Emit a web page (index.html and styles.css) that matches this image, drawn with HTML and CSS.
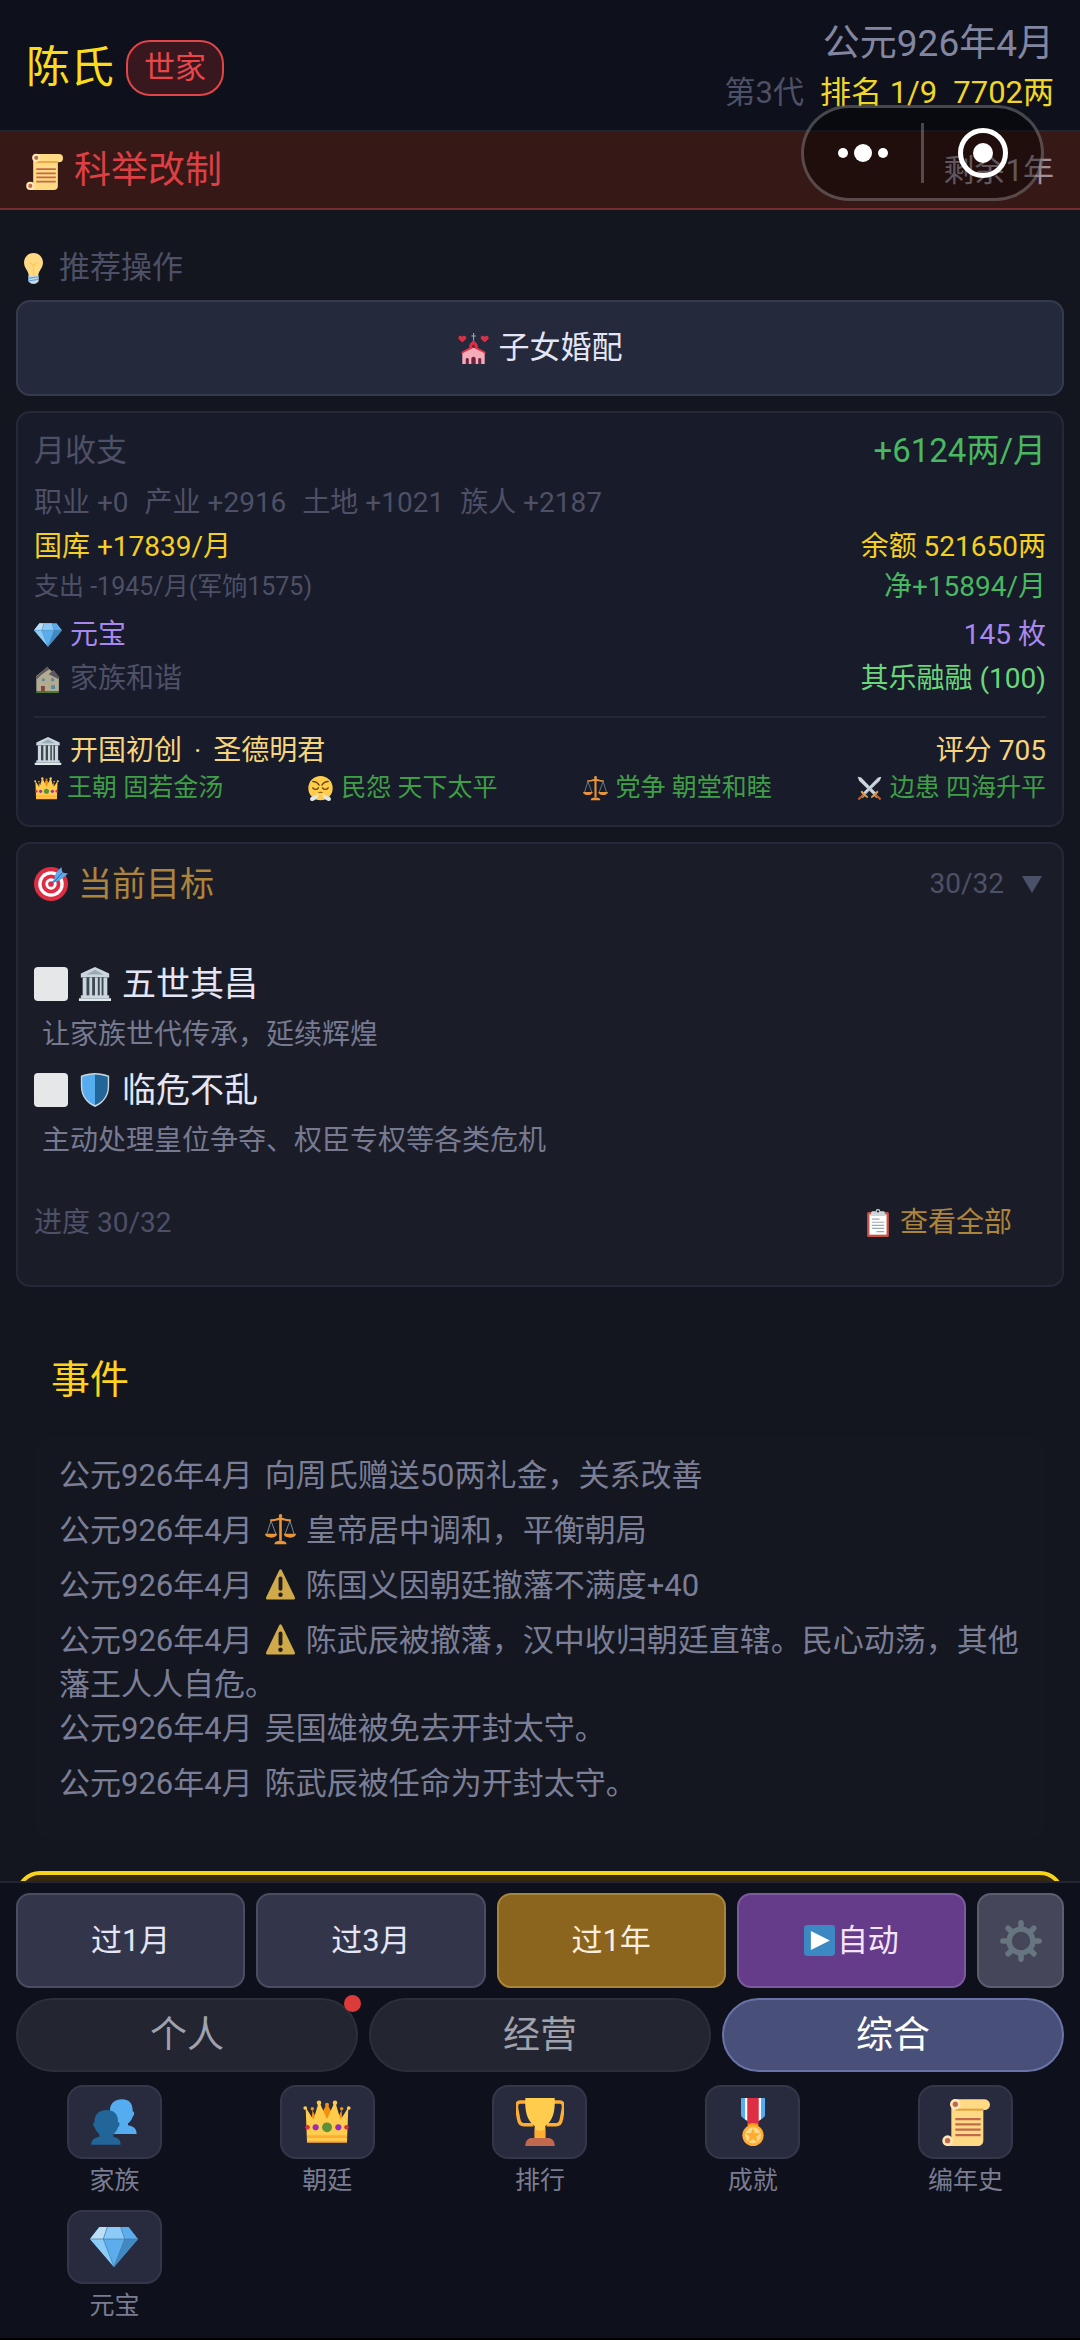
FILE: index.html
```html
<!DOCTYPE html>
<html lang="zh-CN">
  <head>
    <meta charset="UTF-8" />
    <meta name="viewport" content="width=device-width, initial-scale=1.0" />
    <title>陈氏 - 世家</title>
    <link rel="stylesheet" href="styles.css">
  </head>
  <body>
    <!-- Icons -->
    <svg class="sprite" width="0" height="0" aria-hidden="true">
      <symbol id="i-scroll" viewBox="0 0 36 36">
        <path d="M9 1h23a3.500 3.500 0 0 1 0 8H31v23a4 4 0 0 1-4 4H4v-4h3V4a3 3 0 0 1 2-3z" fill="#ffd983" />
        <path d="M10 8h21v1.500H10z" fill="#e39f3d" />
        <circle cx="10" cy="4.700" r="4" fill="#ffe8b6" /><circle cx="10" cy="4.700" r="2" fill="#c1694f" />
        <circle cx="4.200" cy="32" r="4" fill="#ffe8b6" /><circle cx="4.200" cy="32" r="2" fill="#c1694f" />
        <path d="M10 15.800h19M10 19.800h19M10 23.800h19M10 27.800h19" stroke="#c1694f" stroke-width="1.700" />
      </symbol>
      <symbol id="i-bulb" viewBox="0 0 36 36">
        <path d="M18 0c6.500 0 11 5 11 11 0 7-5.500 9.500-5.500 16h-11C12.500 20.500 7 18 7 11 7 5 11.500 0 18 0z" fill="#ffd983" />
        <path d="M14 11l4 4 4-4M18 15v12" stroke="#ffcc4d" stroke-width="1.500" fill="none" />
        <path d="M12 26h12v6c0 2-3 4-6 4s-6-2-6-4z" fill="#ccd6dd" />
        <path d="M12 29.500l12-2M12 32.500l12-2" stroke="#50a5e6" stroke-width="1.300" />
      </symbol>
      <symbol id="i-church" viewBox="0 0 36 36">
        <path d="M17.500 0h1.200v3h2v1.200h-2V9h-1.200V4.200h-2V3h2z" fill="#9aaab4" />
        <path d="M5 22l13-7 13 7v14H5z" fill="#f4abba" />
        <path d="M14 13l4-4 4 4v7h-8z" fill="#f4abba" />
        <path d="M13 14l5-6 5 6v3l9 5v2L18 17 4 24v-2l9-5z" fill="#dd2e44" />
        <path d="M16.500 17v-2a1.500 1.500 0 0 1 3 0v2zM9 36v-6a2 2 0 0 1 3.500 0v6zM15.500 36v-6a2.500 2.500 0 0 1 5 0v6zM23.500 36v-6a2 2 0 0 1 3.500 0v6z" fill="#6b2440" />
        <path d="M5 11L.7 7C-.8 3 4 2 5 4.500 6 2 10.800 3 9.300 7zM31 11l-4.300-4c-1.500-4 3.300-5 4.300-2.500 1-2.500 5.800-1.500 4.300 2.500z" fill="#dd2e44" />
      </symbol>
      <symbol id="i-gem" viewBox="0 0 36 36">
        <path d="M7 3h22l7 9-18 21L0 12z" fill="#5dadec" />
        <path d="M7 3h6l-3 9H0z" fill="#bddef4" />
        <path d="M13 3h10l3 9H10z" fill="#8ccaf7" />
        <path d="M0 12h10l8 21z" fill="#8ccaf7" />
        <path d="M26 12h10L18 33z" fill="#4289c1" />
        <path d="M0 12h36M13 3l-3 9 8 21 8-21-3-9" fill="none" stroke="#3a78aa" stroke-width=".5" />
      </symbol>
      <symbol id="i-house" viewBox="0 0 36 36">
        <path d="M3 34V14L17 3l15 13v18z" fill="#d9cfae" />
        <path d="M2 16L17 2l3 3-11 8-5 5zM19 12l6-6 8 10-2 2z" fill="#6f6868" />
        <path d="M4 34h28v2H2z" fill="#5c913b" />
        <path d="M9 27h5v7H9z" fill="#a0533c" />
        <path d="M22 26h5v5h-5zM22 17h4v4h-4z" fill="#6ba4b8" />
        <circle cx="12" cy="19" r="2" fill="#6ba4b8" />
      </symbol>
      <symbol id="i-bank" viewBox="0 0 36 36">
        <path d="M18 0l15 7v4H3V7z" fill="#ccd6dd" />
        <path d="M18 3l9 5H9z" fill="#99aab5" />
        <path d="M5 11h26v20H5z" fill="#3e4850" />
        <path d="M5 11h4v20H5zM12 11h3v20h-3zM18 11h3v20h-3zM27 11h4v20h-4zM23 11h2v20h-2z" fill="#ccd6dd" />
        <path d="M3 30h30v3H3z" fill="#ccd6dd" /><path d="M1 33h34v3H1z" fill="#e1e8ed" />
      </symbol>
      <symbol id="i-crown" viewBox="0 0 36 36">
        <path d="M7 9l4 8 6-11h2l6 11 4-8 1 19H6z" fill="#f4900c" />
        <path d="M2 7l5 8 1 1L11.500 4h1.200L18 16 23.300 4h1.200L28 16l1-1 5-8-1 26H3z" fill="#ffcc4d" />
        <path d="M3 28h30v2H3zM3 32h30v1.500H3z" fill="#ffac33" />
        <g fill="#ffcc4d"><circle cx="1.700" cy="7.500" r="1.400" /><circle cx="34.300" cy="7.500" r="1.400" /><circle cx="12" cy="3.500" r="1.700" /><circle cx="24" cy="3.500" r="1.700" /></g>
        <g fill="#f4900c"><circle cx="18" cy="5" r="1.500" /><circle cx="7" cy="8" r="1.300" /><circle cx="29" cy="8" r="1.300" /></g>
        <circle cx="18" cy="22" r="3.700" fill="#5c913b" />
        <g fill="#9c2bb8"><circle cx="9.500" cy="22" r="2.300" /><circle cx="26.500" cy="22" r="2.300" /></g>
        <g fill="#dd2e44"><circle cx="3.400" cy="22" r="1.700" /><circle cx="32.600" cy="22" r="1.700" /></g>
      </symbol>
      <symbol id="i-huff" viewBox="0 0 36 36">
        <circle cx="18" cy="17.500" r="17.500" fill="#ffcc4d" />
        <path d="M7 8c4 0 7 2 9 5M29 8c-4 0-7 2-9 5M7 17c2 3 6 3 8 0M29 17c-2 3-6 3-8 0" fill="none" stroke="#664500" stroke-width="2" stroke-linecap="round" />
        <path d="M14 24c2-2 6-2 8 0z" fill="#664500" />
        <path d="M15 24c0 7-3 9-6 11-3 2-6 1-6-2s3-3 4-4c3 0 6-2 8-5zM21 24c0 7 3 9 6 11 3 2 6 1 6-2s-3-3-4-4c-3 0-6-2-8-5z" fill="#e1e8ed" />
      </symbol>
      <symbol id="i-scales" viewBox="0 0 36 36">
        <path d="M7 8L2 24M7 8l6 16M29 8l-6 16M29 8l5 16" stroke="#99aab5" stroke-width=".9" />
        <path d="M16.500 2h3v29h-3zM6 6c5 1 8-2 12-2s7 3 12 2v2c-5 1-8-1-12-1s-7 2-12 1z" fill="#e8953a" />
        <circle cx="18" cy="2" r="2" fill="#e8953a" />
        <path d="M0 23h14c0 6-14 6-14 0zM22 23h14c0 6-14 6-14 0zM11 35c0-3 3-4 7-4s7 1 7 4z" fill="#e8953a" />
      </symbol>
      <symbol id="i-swords" viewBox="0 0 36 36">
        <path d="M1 1l5 1 22 23-3 3L3 7z" fill="#ccd6dd" /><path d="M35 1l-5 1L8 25l3 3L33 7z" fill="#aebbc4" />
        <path d="M34 2L9 26" stroke="#e1e8ed" stroke-width="1.500" />
        <path d="M20 30l9-9 2 2-4 5 3 2-2 2-3-3-4 3zM16 30l-9-9-2 2 4 5-3 2 2 2 3-3 4 3z" fill="#d99e4a" />
        <path d="M27 27l7 7M9 27l-7 7" stroke="#b5623a" stroke-width="3" />
      </symbol>
      <symbol id="i-target" viewBox="0 0 36 36">
        <circle cx="18" cy="18" r="18" fill="#dd2e44" /><circle cx="18" cy="18" r="13.500" fill="#fff" />
        <circle cx="18" cy="18" r="10" fill="#dd2e44" /><circle cx="18" cy="18" r="6" fill="#fff" /><circle cx="18" cy="18" r="3" fill="#dd2e44" />
        <path d="M18 18L29 7" stroke="#744eaa" stroke-width="1.500" />
        <path d="M20 17l3-10 6-7 1 6 6 1-7 6z" fill="#55acee" /><path d="M21 16l9-10" stroke="#269" stroke-width="1" />
      </symbol>
      <symbol id="i-shield" viewBox="0 0 36 36">
        <path d="M18 0c5 0 10 1 15 3v11c0 12-8 19-15 22C11 33 3 26 3 14V3c5-2 10-3 15-3z" fill="#ccd6dd" />
        <path d="M18 1.500V34C11 31 4.500 25 4.500 14V4c4-1.500 9-2.500 13.500-2.500z" fill="#55acee" />
        <path d="M18 1.500V34c7-3 13.500-9 13.500-20V4C27 2.500 22.500 1.500 18 1.500z" fill="#226699" />
      </symbol>
      <symbol id="i-clipboard" viewBox="0 0 36 36">
        <rect x="4" y="4" width="28" height="32" rx="2" fill="#c65346" />
        <path d="M7 7h22v26H7z" fill="#fff" />
        <path d="M18 0a3 3 0 0 1 3 3h5l2 6H8l2-6h5a3 3 0 0 1 3-3z" fill="#ccd6dd" /><circle cx="18" cy="3" r="1.500" fill="#292f33" />
        <path d="M10 13h10M10 17h16M10 21h16M10 25h16M16 29h10" stroke="#99aab5" stroke-width="1.500" />
      </symbol>
      <symbol id="i-warn" viewBox="0 0 36 36">
        <path d="M16.500 1.500c1-1.500 2-1.500 3 0l15 31c1 2 0 3-2 3h-29c-2 0-3-1-2-3z" fill="#d0aa4a" />
        <path d="M18 11v12" stroke="#231f20" stroke-width="4.500" stroke-linecap="round" /><circle cx="18" cy="30" r="2.600" fill="#231f20" />
      </symbol>
      <symbol id="i-play" viewBox="0 0 36 36">
        <rect width="36" height="36" rx="4" fill="#3b88c3" /><path d="M8 7l22 11L8 29z" fill="#fff" />
      </symbol>
      <symbol id="i-gear" viewBox="0 0 36 36">
        <g fill="none" stroke="#66757f" stroke-linecap="round">
          <circle cx="18" cy="18" r="10.200" stroke-width="4.600" />
          <path d="M18 2.500v5M18 28.500v5M2.500 18h5M28.500 18h5M7 7l3.500 3.500M25.500 25.500L29 29M7 29l3.500-3.500M25.500 10.500L29 7" stroke-width="4.800" />
        </g>
      </symbol>
      <symbol id="i-people" viewBox="0 0 36 36">
        <path d="M24 1c5 0 8 3 8 8v1c1.500 0 1.500 3 0 4-.5 2-2 4-3.500 5v1.500c4 1 6.500 2 6.500 6.500H15V9c0-5 4-8 9-8z" fill="#55acee" />
        <path d="M12.500 9c5 0 8.500 3 8.500 8v1c1.500 0 1.500 3 0 4-.5 2-2 4-3.500 5v2c3.500 1 5.500 2 5.500 6H1c0-4 2-5 6-6v-2c-1.500-1-3-3-3.500-5-1.500-1-1.500-4 0-4v-1c0-5 4-8 9-8z" fill="#226699" />
      </symbol>
      <symbol id="i-trophy" viewBox="0 0 36 36">
        <path d="M8 3H3C1 3 0 5 .5 8l1.500 8c.5 3 2 4 4 4h7M28 3h5c2 0 3 2 2.500 5L34 16c-.5 3-2 4-4 4h-7" fill="none" stroke="#ffac33" stroke-width="2.600" />
        <path d="M7 0h22c.5 9-1 17-7 21v9h-8v-9C8 17 6.500 9 7 0z" fill="#ffcc4d" />
        <path d="M14 23c2 2 6 2 8 0v8h-8z" fill="#ffac33" /><path d="M11 30h14c3 1 4 3 4 6H7c0-3 1-5 4-6z" fill="#c1694f" />
      </symbol>
      <symbol id="i-medal" viewBox="0 0 36 36">
        <path d="M9 0h18v13c0 2-5 4-9 7-4-3-9-5-9-7z" fill="#55acee" />
        <path d="M12 0h12v16l-6 4-6-4z" fill="#fff" /><path d="M13.700 0h8.600v19h-8.600z" fill="#dd2e44" />
        <path d="M14 19h8v3h-8z" fill="#f4900c" />
        <circle cx="18" cy="28" r="8" fill="#ffac33" /><circle cx="18" cy="28" r="6" fill="#ffd983" />
        <path d="M18 22.500l1.500 3.700 4 .3-3 2.600 1 3.900-3.500-2.100-3.500 2.100 1-3.900-3-2.600 4-.3z" fill="#ffac33" />
      </symbol>
    </svg>

    <header class="header">
      <div class="family">
        <h1>陈氏</h1>
        <span class="rank-badge">世家</span>
      </div>
      <div class="status">
        <div class="date">公元926年4月</div>
        <div class="summary">
          <span class="muted">第3代</span>
          <span>排名 1/9</span>
          <span>7702两</span>
        </div>
      </div>
    </header>

    <div class="banner">
      <div class="banner-title"><svg class="icon"><use href="#i-scroll" /></svg>科举改制</div>
      <div class="banner-left">剩余1年</div>
    </div>

    <div class="capsule">
      <button type="button" aria-label="更多">
        <svg width="52" height="20" viewBox="0 0 52 20" fill="#fff"><circle cx="6" cy="10" r="5" /><circle cx="26" cy="10" r="9" /><circle cx="46" cy="10" r="5" /></svg>
      </button>
      <button type="button" aria-label="关闭">
        <svg width="50" height="50" viewBox="0 0 50 50"><circle cx="25" cy="25" r="22.500" fill="none" stroke="#fff" stroke-width="5" /><circle cx="25" cy="25" r="10" fill="#fff" /></svg>
      </button>
    </div>

    <main class="content">
      <div class="tip"><svg class="icon"><use href="#i-bulb" /></svg>推荐操作</div>
      <button type="button" class="tip-button"><svg class="icon"><use href="#i-church" /></svg>子女婚配</button>

      <section class="card finance">
        <div class="row">
          <span class="row-title muted">月收支</span>
          <span class="total green">+6124两/月</span>
        </div>
        <div class="row sources muted">
          <span>职业 +0</span><span>产业 +2916</span><span>土地 +1021</span><span>族人 +2187</span>
        </div>
        <div class="row gold tight">
          <span>国库 +17839/月</span>
          <span>余额 521650两</span>
        </div>
        <div class="row">
          <span class="small muted">支出 -1945/月(军饷1575)</span>
          <span class="green">净+15894/月</span>
        </div>
        <div class="row purple loose">
          <span class="label"><svg class="icon"><use href="#i-gem" /></svg>元宝</span>
          <span>145 枚</span>
        </div>
        <div class="row tight">
          <span class="label muted"><svg class="icon dim"><use href="#i-house" /></svg>家族和谐</span>
          <span class="lime">其乐融融 (100)</span>
        </div>
        <div class="dynasty">
          <div class="row cream">
            <span class="label"><svg class="icon"><use href="#i-bank" /></svg><span>开国初创<span class="sep">·</span>圣德明君</span></span>
            <span>评分 705</span>
          </div>
          <div class="stats">
            <span class="label"><svg class="icon"><use href="#i-crown" /></svg>王朝 固若金汤</span>
            <span class="label"><svg class="icon"><use href="#i-huff" /></svg>民怨 天下太平</span>
            <span class="label"><svg class="icon"><use href="#i-scales" /></svg>党争 朝堂和睦</span>
            <span class="label"><svg class="icon"><use href="#i-swords" /></svg>边患 四海升平</span>
          </div>
        </div>
      </section>

      <section class="card goals">
        <div class="goals-head">
          <h2><svg class="icon"><use href="#i-target" /></svg>当前目标</h2>
          <span class="goals-count">30/32 <svg width="20" height="17" viewBox="0 0 20 17"><path d="M0 0h20L10 17z" fill="#4a5168" /></svg></span>
        </div>
        <ul class="goal-list">
          <li>
            <label class="goal"><input type="checkbox" /><svg class="icon"><use href="#i-bank" /></svg>五世其昌</label>
            <p>让家族世代传承，延续辉煌</p>
          </li>
          <li>
            <label class="goal"><input type="checkbox" /><svg class="icon"><use href="#i-shield" /></svg>临危不乱</label>
            <p>主动处理皇位争夺、权臣专权等各类危机</p>
          </li>
        </ul>
        <div class="goals-foot">
          <span class="muted">进度 30/32</span>
          <button type="button" class="view-all"><svg class="icon"><use href="#i-clipboard" /></svg>查看全部</button>
        </div>
      </section>

      <section class="events">
        <h2>事件</h2>
        <ul class="event-list">
          <li><span class="time">公元926年4月</span>向周氏赠送50两礼金，关系改善</li>
          <li><span class="time">公元926年4月</span><svg class="icon"><use href="#i-scales" /></svg>皇帝居中调和，平衡朝局</li>
          <li><span class="time">公元926年4月</span><svg class="icon"><use href="#i-warn" /></svg>陈国义因朝廷撤藩不满度+40</li>
          <li><span class="time">公元926年4月</span><svg class="icon"><use href="#i-warn" /></svg>陈武辰被撤藩，汉中收归朝廷直辖。民心动荡，其他藩王人人自危。</li>
          <li><span class="time">公元926年4月</span>吴国雄被免去开封太守。</li>
          <li><span class="time">公元926年4月</span>陈武辰被任命为开封太守。</li>
        </ul>
      </section>

      <section class="notice"></section>
    </main>

    <footer class="bottom-bar">
      <div class="actions">
        <button type="button">过1月</button>
        <button type="button">过3月</button>
        <button type="button" class="year">过1年</button>
        <button type="button" class="auto"><svg class="icon"><use href="#i-play" /></svg>自动</button>
        <button type="button" class="settings" aria-label="设置"><svg class="icon"><use href="#i-gear" /></svg></button>
      </div>
      <div class="tabs">
        <button type="button">个人<span class="dot"></span></button>
        <button type="button">经营</button>
        <button type="button" class="active">综合</button>
      </div>
      <nav class="menu">
        <a href="#"><span class="menu-icon"><svg class="icon"><use href="#i-people" /></svg></span>家族</a>
        <a href="#"><span class="menu-icon"><svg class="icon"><use href="#i-crown" /></svg></span>朝廷</a>
        <a href="#"><span class="menu-icon"><svg class="icon"><use href="#i-trophy" /></svg></span>排行</a>
        <a href="#"><span class="menu-icon"><svg class="icon"><use href="#i-medal" /></svg></span>成就</a>
        <a href="#"><span class="menu-icon"><svg class="icon"><use href="#i-scroll" /></svg></span>编年史</a>
        <a href="#"><span class="menu-icon"><svg class="icon"><use href="#i-gem" /></svg></span>元宝</a>
      </nav>
    </footer>
  </body>
</html>
```
FILE: styles.css
```css
* {
  box-sizing: border-box;
}

body {
  margin: 0;
  height: 100vh;
  display: flex;
  flex-direction: column;
  position: relative;
  background-color: #13161e;
  color: #e4e6f5;
  font-family: Roboto, "Noto Sans CJK SC", sans-serif;
  font-size: 31px;
  line-height: 40px;
}

h1,
h2,
p,
ul {
  margin: 0;
  padding: 0;
  font-weight: normal;
  list-style: none;
}

button {
  font: inherit;
  color: inherit;
  margin: 0;
  padding: 0;
  border: none;
  background: none;
  cursor: pointer;
}

.sprite {
  position: absolute;
}

.icon {
  width: 1em;
  height: 1em;
  flex: none;
}

.icon.dim {
  opacity: 0.8;
}

.muted {
  color: #4d5066;
}

.gold {
  color: #f5d022;
}

.green {
  color: #48b861;
}

.lime {
  color: #6bd67b;
}

.purple {
  color: #a988ee;
}

.cream {
  color: #f6d57c;
}

/* Header */
.header {
  flex: none;
  display: flex;
  justify-content: space-between;
  align-items: center;
  padding: 19px 26px 13px;
  background-color: #0e111b;
  border-bottom: 2px solid #22252f;
}

.family {
  display: flex;
  align-items: center;
  gap: 12px;
}

.family h1 {
  color: #fbdb1c;
  font-size: 44px;
  line-height: 56px;
}

.rank-badge {
  padding: 6px 16px;
  border: 2px solid #e04548;
  border-radius: 24px;
  background-color: #38171e;
  color: #e84649;
  font-size: 31px;
}

.status {
  text-align: right;
  line-height: 49px;
}

.date {
  color: #8386a0;
  font-size: 37px;
}

.summary {
  display: flex;
  justify-content: flex-end;
  gap: 16px;
  color: #f0d727;
}

.summary .muted {
  color: #4d5066;
}

.banner {
  flex: none;
  display: flex;
  justify-content: space-between;
  align-items: center;
  padding: 15px 26px 13px;
  background-color: #361816;
  border-bottom: 2px solid #762e2c;
}

.banner-title {
  display: flex;
  align-items: center;
  gap: 11px;
  color: #dc4044;
  font-size: 37px;
  line-height: 48px;
}

.banner-left {
  color: #a1909c;
}

/* Mini program capsule, floats over the header */
.capsule {
  position: absolute;
  top: 105px;
  right: 36px;
  display: flex;
  align-items: center;
  width: 243px;
  height: 96px;
  border: 3px solid rgba(255, 255, 255, 0.25);
  border-radius: 48px;
  background-color: rgba(0, 0, 0, 0.4);
}

.capsule button {
  flex: 1;
  height: 60px;
  display: flex;
  align-items: center;
  justify-content: center;
}

.capsule button + button {
  border-left: 3px solid rgba(255, 255, 255, 0.25);
}

/* Content */
.content {
  flex: 1;
  min-height: 0;
  overflow: hidden;
  padding: 0 16px;
}

.tip {
  display: flex;
  align-items: center;
  gap: 10px;
  margin: 38px 0 12px;
  padding-left: 2px;
  color: #4d5066;
}

.tip-button {
  display: flex;
  align-items: center;
  justify-content: center;
  gap: 10px;
  width: 100%;
  height: 96px;
  border: 2px solid #363a4d;
  border-radius: 14px;
  background-color: #25293c;
}

.card {
  margin-top: 15px;
  border: 2px solid #252937;
  border-radius: 14px;
  background-color: #181b29;
  font-size: 28px;
}

.finance {
  padding: 18px 16px 20px;
}

.row {
  display: flex;
  justify-content: space-between;
  align-items: center;
}

.row.tight {
  margin-top: 4px;
}

.row.loose {
  margin-top: 8px;
}

.row-title {
  font-size: 31px;
}

.total {
  font-size: 33px;
}

.row.sources {
  justify-content: flex-start;
  gap: 16px;
  margin-top: 12px;
}

.small {
  font-size: 25px;
}

.label {
  display: flex;
  align-items: center;
  gap: 8px;
}

.sep {
  margin: 0 12px;
}

.dynasty {
  margin-top: 17px;
  padding-top: 13px;
  border-top: 2px solid #252937;
}

.stats {
  display: flex;
  justify-content: space-between;
  color: #3f9f46;
  font-size: 25px;
  line-height: 34px;
}

.goals {
  padding: 16px 16px 42px;
  background-color: #1a1d28;
}

.goals-head {
  display: flex;
  justify-content: space-between;
  align-items: center;
  margin-bottom: 51px;
}

.goals-head h2 {
  display: flex;
  align-items: center;
  gap: 10px;
  color: #ac843b;
  font-size: 34px;
  line-height: 48px;
}

.goals-count {
  display: flex;
  align-items: center;
  gap: 18px;
  padding-right: 4px;
  color: #4d5066;
}

.goal-list {
  display: flex;
  flex-direction: column;
  gap: 4px;
}

.goal {
  display: flex;
  align-items: center;
  gap: 10px;
  font-size: 34px;
  line-height: 50px;
}

.goal input {
  appearance: none;
  width: 34px;
  height: 34px;
  margin: 0;
  border-radius: 4px;
  background-color: #e6e7e8;
}

.goal-list p {
  padding-left: 8px;
  color: #777a91;
  line-height: 52px;
}

.goals-foot {
  display: flex;
  justify-content: space-between;
  align-items: center;
  margin-top: 36px;
}

.view-all {
  display: flex;
  align-items: center;
  gap: 8px;
  padding: 0 34px;
  color: #ac843b;
}

.events {
  padding: 65px 19px 0;
}

.events h2 {
  padding-left: 16px;
  color: #ffd21f;
  font-size: 39px;
  line-height: 56px;
}

.event-list {
  margin-top: 28px;
  padding: 12px 8px 28px 24px;
  border-radius: 14px;
  background-color: #14171f;
  color: #7b7e97;
  line-height: 33px;
}

.event-list .time {
  margin-right: 12px;
  line-height: 55px;
}

.event-list .icon {
  margin-right: 10px;
  vertical-align: -4px;
}

.notice {
  height: 200px;
  margin-top: 32px;
  border: 4px solid #f7d41c;
  border-radius: 24px;
  background-color: #35280f;
}

/* Bottom bar */
.bottom-bar {
  flex: none;
  padding: 10px 16px 15px;
  border-top: 2px solid #22252f;
  border-bottom: 2px solid #000;
  background-color: #0e111b;
}

.actions,
.tabs {
  display: flex;
  gap: 11px;
}

.actions button {
  flex: 1;
  height: 95px;
  display: flex;
  align-items: center;
  justify-content: center;
  border: 2px solid #4a4d62;
  border-radius: 14px;
  background-color: #33364b;
}

.actions .year {
  border-color: #a5853f;
  background-color: #8b641d;
  color: #fbeede;
}

.actions .auto {
  gap: 2px;
  border-color: #7c5a9e;
  background-color: #643c8a;
  color: #f5e4fb;
}

.actions .settings {
  flex: 0 0 87px;
  border-color: #5c5d70;
  background-color: #454659;
  font-size: 42px;
}

.tabs {
  margin-top: 10px;
}

.tabs button {
  position: relative;
  flex: 1;
  height: 74px;
  padding-top: 2px;
  border: 2px solid #2c2e39;
  border-radius: 37px;
  background-color: #232530;
  color: #a0a2ad;
  font-size: 37px;
}

.tabs .active {
  border-color: #6973a8;
  background-color: #485079;
  color: #fff;
}

.dot {
  position: absolute;
  top: -5px;
  right: -5px;
  width: 17px;
  height: 17px;
  border-radius: 50%;
  background-color: #dd3b3b;
}

.menu {
  display: grid;
  grid-template-columns: repeat(5, 1fr);
  row-gap: 12px;
  margin: 13px -8px 0;
}

.menu a {
  display: flex;
  flex-direction: column;
  align-items: center;
  gap: 5px;
  color: #7a7c92;
  font-size: 25px;
  line-height: 34px;
  text-decoration: none;
}

.menu-icon {
  display: flex;
  align-items: center;
  justify-content: center;
  width: 95px;
  height: 74px;
  border: 2px solid #34374a;
  border-radius: 16px;
  background-color: #282b3d;
  font-size: 48px;
}
```
